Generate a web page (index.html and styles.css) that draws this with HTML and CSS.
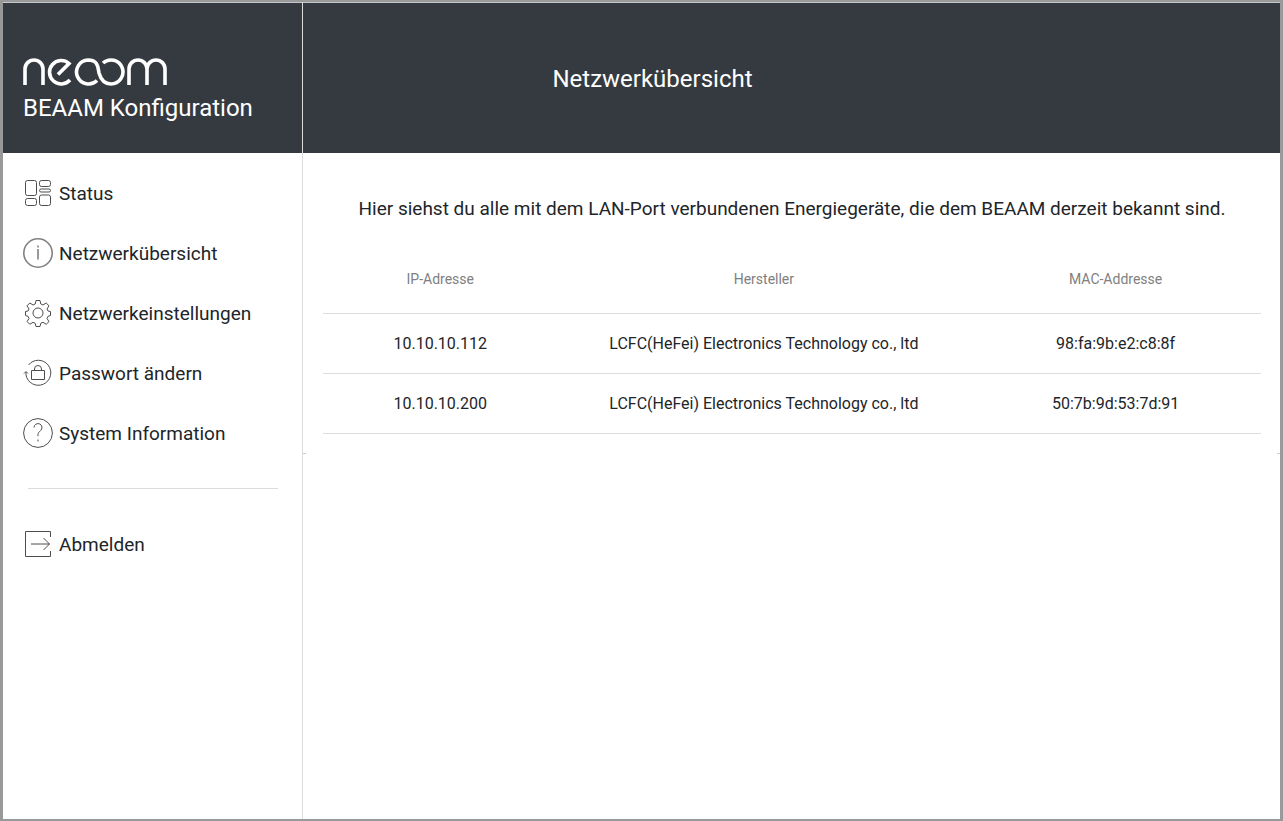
FILE: index.html
```html
<!DOCTYPE html>
<html lang="de">
<head>
<meta charset="utf-8">
<title>BEAAM Konfiguration</title>
<link rel="stylesheet" href="styles.css">
</head>
<body>
<div class="app">
  <header class="brand">
    <svg class="logo" width="146" height="30" viewBox="0 0 146 30" role="img" aria-label="neoom">
      <path d="M2 29V13a9 9 0 0 1 18 0V29"/>
      <path d="M35 18.500L46 7.500A11.700 11.700 0 1 0 47 24"/>
      <path d="M74 24.500A12 12 0 1 1 65 4C76 4 75 13 76 17C78 24 82 28 88 28A12 12 0 1 0 80 7"/>
      <path d="M106 29V13a9 9 0 0 1 18 0V29M124 13a9 9 0 0 1 18 0V29"/>
    </svg>
    <p class="product">BEAAM Konfiguration</p>
  </header>
  <header class="topbar"><h1 class="title">Netzwerkübersicht</h1></header>
  <nav class="sidebar">
    <a class="item" href="#status">
      <svg class="icon" viewBox="0 0 30 30"><rect x="2.500" y="2.500" width="11" height="15" rx="2"/><rect x="2.500" y="20.500" width="11" height="7" rx="2"/><rect x="16.500" y="2.500" width="11" height="6" rx="2"/><rect x="16.500" y="11" width="11" height="3" rx="1.500"/><rect x="16.500" y="17" width="11" height="10.500" rx="2"/></svg>
      Status</a>
    <a class="item" href="#uebersicht">
      <svg class="icon" viewBox="0 0 30 30"><g class="bold"><circle cx="15" cy="15" r="14.200"/><path d="M15 11V21.500M15 7.500v2"/></g></svg>
      Netzwerkübersicht</a>
    <a class="item" href="#einstellungen">
      <svg class="icon" viewBox="0 0 30 30"><circle cx="15" cy="15" r="5"/><path stroke-linejoin="round" d="M13 2.500h4l.8 3.500 2.200 1 3.200-2 2.800 2.800-2 3.200 1 2 2.500.5v4l-2.500.8-1 2.200 2 3-2.800 2.800-3.200-2-2.200 1-.8 3.200h-4l-.8-3.200-2.200-1-3.200 2-2.800-2.800 2-3-1-2.200-2.500-.8v-4l2.500-.5 1-2-2-3.200 2.800-2.800 3.200 2 2.200-1z"/></svg>
      Netzwerkeinstellungen</a>
    <a class="item" href="#passwort">
      <svg class="icon" viewBox="0 0 30 30"><path d="M5.500 7A12.500 12.500 0 1 1 3 17V14M1 15.500l2-2 2 2M8.500 12.500h13v9h-13zM11.500 12.500v-1.500a3.500 3.500 0 0 1 7 0v1.500"/></svg>
      Passwort ändern</a>
    <a class="item" href="#system">
      <svg class="icon" viewBox="0 0 30 30"><circle cx="15" cy="15" r="14.400"/><path d="M11 9.500a4 4 0 1 1 6.500 3.200c-1.500 1.300-2.500 2-2.500 4v1.500M15 21.500v2"/></svg>
      System Information</a>
    <hr class="rule">
    <a class="item" href="#abmelden">
      <svg class="icon" viewBox="0 0 30 30"><path d="M27.500 8V2.500h-25v25h25V22M8 15h18.500M20.500 9l6 6-6 6"/></svg>
      Abmelden</a>
  </nav>
  <main class="content">
    <section class="panel">
      <p class="intro">Hier siehst du alle mit dem LAN-Port verbundenen Energiegeräte, die dem BEAAM derzeit bekannt sind.</p>
      <table class="devices">
        <colgroup><col class="col-ip"><col class="col-vendor"><col class="col-mac"></colgroup>
        <thead><tr><th scope="col">IP-Adresse</th><th scope="col">Hersteller</th><th scope="col">MAC-Addresse</th></tr></thead>
        <tbody>
          <tr><td>10.10.10.112</td><td>LCFC(HeFei) Electronics Technology co., ltd</td><td>98:fa:9b:e2:c8:8f</td></tr>
          <tr><td>10.10.10.200</td><td>LCFC(HeFei) Electronics Technology co., ltd</td><td>50:7b:9d:53:7d:91</td></tr>
        </tbody>
      </table>
    </section>
  </main>
</div>
</body>
</html>
```
FILE: styles.css
```css
* { box-sizing: border-box; }
body {
  margin: 0;
  background: #999;
  color: #212529;
  font-family: Roboto, "Liberation Sans", sans-serif;
}
.app {
  display: grid;
  grid-template-columns: 299px 1fr;
  grid-template-rows: 151px 1fr;
  min-height: 100vh;
  border: 2px solid #999;
  border-left-width: 3px;
  border-right-width: 3px;
  background: #fff;
}
.brand, .topbar {
  background: #353a41;
  color: #fff;
  border-top: 1px solid #c4c8ca;
}
.brand {
  display: flex;
  flex-direction: column;
  padding: 53px 20px 0;
}
.logo {
  fill: none;
  stroke: #fff;
  stroke-width: 3.6;
}
.product {
  margin: 4px 0 0;
  font-size: 24px;
  line-height: 36px;
}
.topbar {
  display: flex;
  align-items: center;
  justify-content: center;
  padding: 2px 278px 0 0;
  border-left: 1px solid #dcdcdc;
}
.title {
  margin: 0;
  font-size: 24px;
  line-height: 36px;
  font-weight: 400;
}
.sidebar {
  display: flex;
  flex-direction: column;
  padding: 10px 20px;
}
.item {
  display: flex;
  align-items: center;
  gap: 6px;
  height: 60px;
  color: inherit;
  font-size: 19px;
  text-decoration: none;
}
.icon {
  flex: none;
  width: 30px;
  height: 30px;
  fill: none;
  stroke: #4d4d4d;
  stroke-width: 1;
}
.bold {
  stroke: #808080;
  stroke-width: 1.6;
}
.rule {
  width: 250px;
  margin: 25px 5px;
  border: 0;
  border-top: 1px solid #dcdcdc;
}
.content {
  border-left: 1px solid #dcdcdc;
}
.panel {
  position: relative;
  padding: 41px 19px 20px 20px;
}
/* small marks in the panel's lower corners */
.panel::before, .panel::after {
  content: "";
  position: absolute;
  bottom: 0;
  width: 3px;
  height: 1px;
  background: #ccc;
}
.panel::before { left: 0; }
.panel::after { right: 0; }
.intro {
  margin: 0 0 20px;
  font-size: 19px;
  line-height: 30px;
  text-align: center;
}
.devices {
  width: 100%;
  border-collapse: separate;
  border-spacing: 0;
  table-layout: fixed;
  font-size: 16px;
  text-align: center;
}
.col-ip { width: 25%; }
.col-vendor { width: 44%; }
.col-mac { width: 31%; }
.devices th, .devices td {
  height: 60px;
  padding: 0;
  border-bottom: 1px solid #dcdcdc;
}
.devices th {
  height: 70px;
  color: #808080;
  font-size: 14px;
  font-weight: 400;
}
```
